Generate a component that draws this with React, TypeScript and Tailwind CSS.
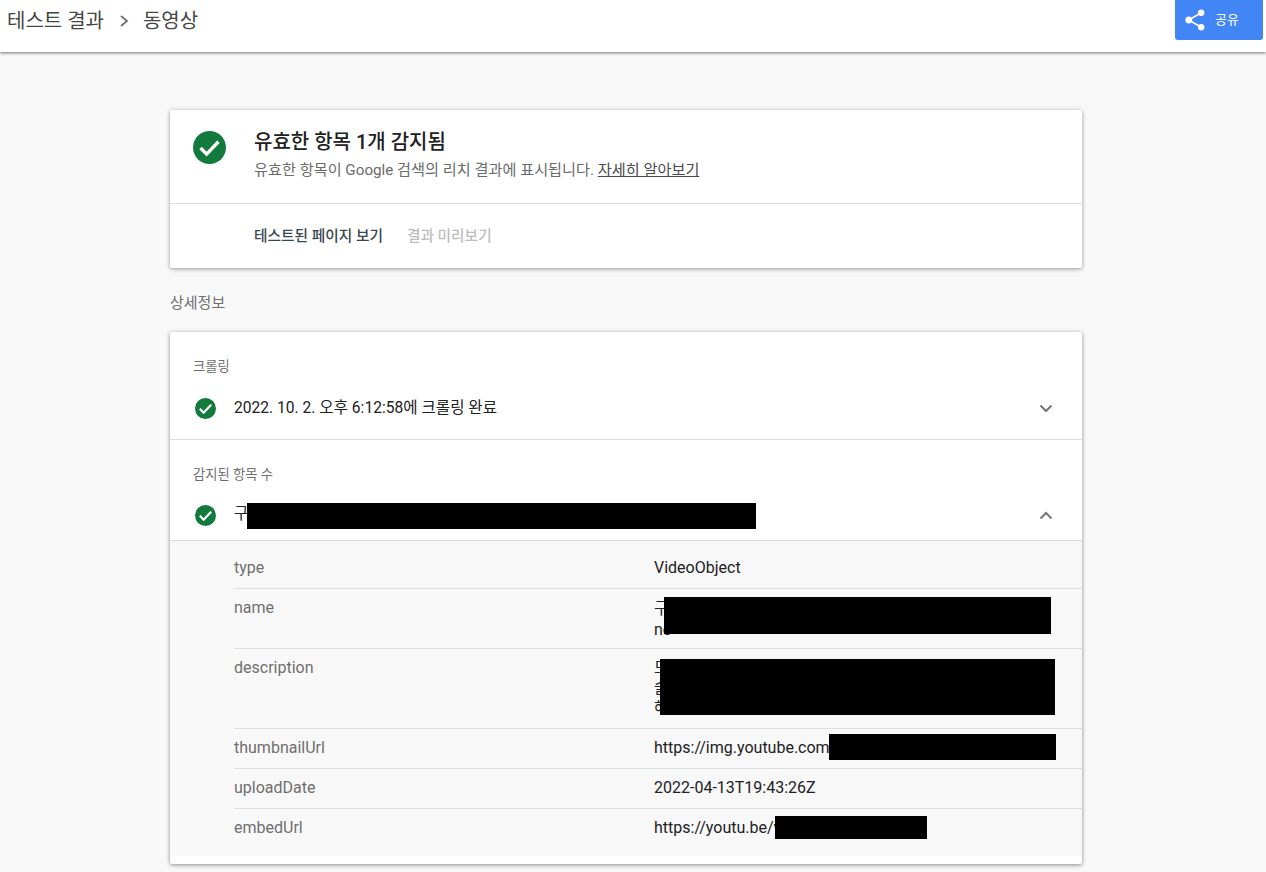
const font = "font-['Roboto','Noto_Sans_CJK_KR',sans-serif]";

function Check({ size }: { size: number }) {
  return (
    <svg width={size} height={size} viewBox="0 0 24 24" className="shrink-0">
      <circle cx="12" cy="12" r="12" fill="#137A3D" />
      <path d="M5.5 12.4l4.4 4.4 8.6-9" fill="none" stroke="#fff" strokeWidth="2.5" />
    </svg>
  );
}

function Chevron({ up }: { up?: boolean }) {
  return (
    <svg width="14" height="9" viewBox="0 0 14 9" className="shrink-0">
      <path d={up ? "M1.5 7.5L7 2l5.5 5.5" : "M1.5 1.5L7 7l5.5-5.5"} fill="none" stroke="#757575" strokeWidth="2" />
    </svg>
  );
}

function Row({ label, h, top = "pt-[9px]", children }: { label: string; h: string; top?: string; children: React.ReactNode }) {
  return (
    <div className={`flex ${h} border-b border-[#dfdfdf] last:border-b-0`}>
      <div className={`w-[420px] ${top} text-[16px] leading-[20px] text-[#6f6f6f]`}>{label}</div>
      <div className={`relative flex-1 ${top} text-[16px] leading-[20px] text-[#202124]`}>{children}</div>
    </div>
  );
}

export default function App() {
  return (
    <div className={`${font} h-[872px] overflow-hidden bg-[#f8f8f8]`}>
      <header className="flex h-[52px] items-start justify-between bg-white pl-[7px] pr-[3px] shadow-[0_1px_3px_rgba(0,0,0,0.55)]">
        <div className="flex h-[42px] items-center text-[20px] text-[#444746]">
          <span>테스트 결과</span>
          <svg width="10" height="14" viewBox="0 0 10 14" className="ml-[15px] mr-[14px]">
            <path d="M2 2l6 5-6 5" fill="none" stroke="#6f6f6f" strokeWidth="1.8" />
          </svg>
          <span>동영상</span>
        </div>
        <button className="flex h-[40px] w-[88px] items-center rounded-b-[3px] bg-[#4285f4] pl-[10px] text-[13px] text-white">
          <svg width="20" height="22" viewBox="0 0 20 22" className="mr-[10px]">
            <circle cx="3.8" cy="11" r="3.4" fill="#fff" />
            <circle cx="16.2" cy="3.8" r="3.2" fill="#fff" />
            <circle cx="16.2" cy="18.2" r="3.2" fill="#fff" />
            <path d="M3.8 11L16.2 3.8M3.8 11l12.4 7.2" stroke="#fff" strokeWidth="1.6" />
          </svg>
          공유
        </button>
      </header>

      <main className="ml-[170px] w-[912px] pt-[58px]">
        <section className="rounded-[2px] bg-white shadow-[0_1px_4px_rgba(0,0,0,0.4)]">
          <div className="flex h-[94px] border-b border-[#dcdcdc] pl-[23px] pt-[21px]">
            <Check size={33} />
            <div className="ml-[28px]">
              <div className="text-[20px] font-medium leading-[22px] text-[#212121]">유효한 항목 1개 감지됨</div>
              <div className="mt-[8px] text-[15.2px] leading-[18px] text-[#6b6b6b]">
                유효한 항목이 Google 검색의 리치 결과에 표시됩니다. <span className="text-[#4a4a4a] underline">자세히 알아보기</span>
              </div>
            </div>
          </div>
          <div className="flex h-[64px] items-center gap-[24px] pl-[84px] text-[14.7px]">
            <span className="font-medium text-[#37474f]">테스트된 페이지 보기</span>
            <span className="font-medium text-[#bdbdbd]">결과 미리보기</span>
          </div>
        </section>

        <h2 className="mt-[25px] text-[15px] leading-[20px] text-[#6f6f6f]">상세정보</h2>

        <section className="mt-[19px] h-[532px] rounded-[2px] bg-white shadow-[0_1px_4px_rgba(0,0,0,0.45)]">
          <div className="h-[108px] border-b border-[#dcdcdc] pl-[25px] pr-[29px] pt-[26px]">
            <div className="ml-[-2px] text-[13.3px] leading-[18px] text-[#6f6f6f]">크롤링</div>
            <div className="mt-[17px] flex h-[30px] items-center">
              <Check size={21} />
              <span className="ml-[18px] mt-[1px] flex-1 text-[15.6px] text-[#212121]">2022. 10. 2. 오후 6:12:58에 크롤링 완료</span>
              <Chevron />
            </div>
          </div>
          <div className="h-[101px] border-b border-[#dcdcdc] pl-[25px] pr-[29px] pt-[26px]">
            <div className="ml-[-2px] text-[13.3px] leading-[18px] text-[#6f6f6f]">감지된 항목 수</div>
            <div className="mt-[16px] flex h-[30px] items-center">
              <Check size={21} />
              <div className="relative ml-[18px] flex-1 text-[15.6px] text-[#212121]">
                구
                <span className="absolute left-[13px] top-0 h-[26px] w-[509px] bg-black" />
              </div>
              <Chevron up />
            </div>
          </div>
          <div className="h-[315px] bg-[#f8f8f8] pl-[64px]">
            <Row label="type" h="h-[48px]" top="pt-[17px]">VideoObject</Row>
            <Row label="name" h="h-[60px]">
              <div className="leading-[21px]">구<br />no</div>
              <span className="absolute left-[10px] top-[8px] h-[37px] w-[387px] bg-black" />
            </Row>
            <Row label="description" h="h-[80px]">
              <div>모<br />술<br />해</div>
              <span className="absolute left-[6px] top-[10px] h-[56px] w-[395px] bg-black" />
            </Row>
            <Row label="thumbnailUrl" h="h-[40px]">
              https://img.youtube.com
              <span className="absolute left-[175px] top-[5px] h-[26px] w-[227px] bg-black" />
            </Row>
            <Row label="uploadDate" h="h-[40px]">2022-04-13T19:43:26Z</Row>
            <Row label="embedUrl" h="h-[47px]">
              https://youtu.be/v
              <span className="absolute left-[121px] top-[7px] h-[23px] w-[152px] bg-black" />
            </Row>
          </div>
        </section>
      </main>
    </div>
  );
}
